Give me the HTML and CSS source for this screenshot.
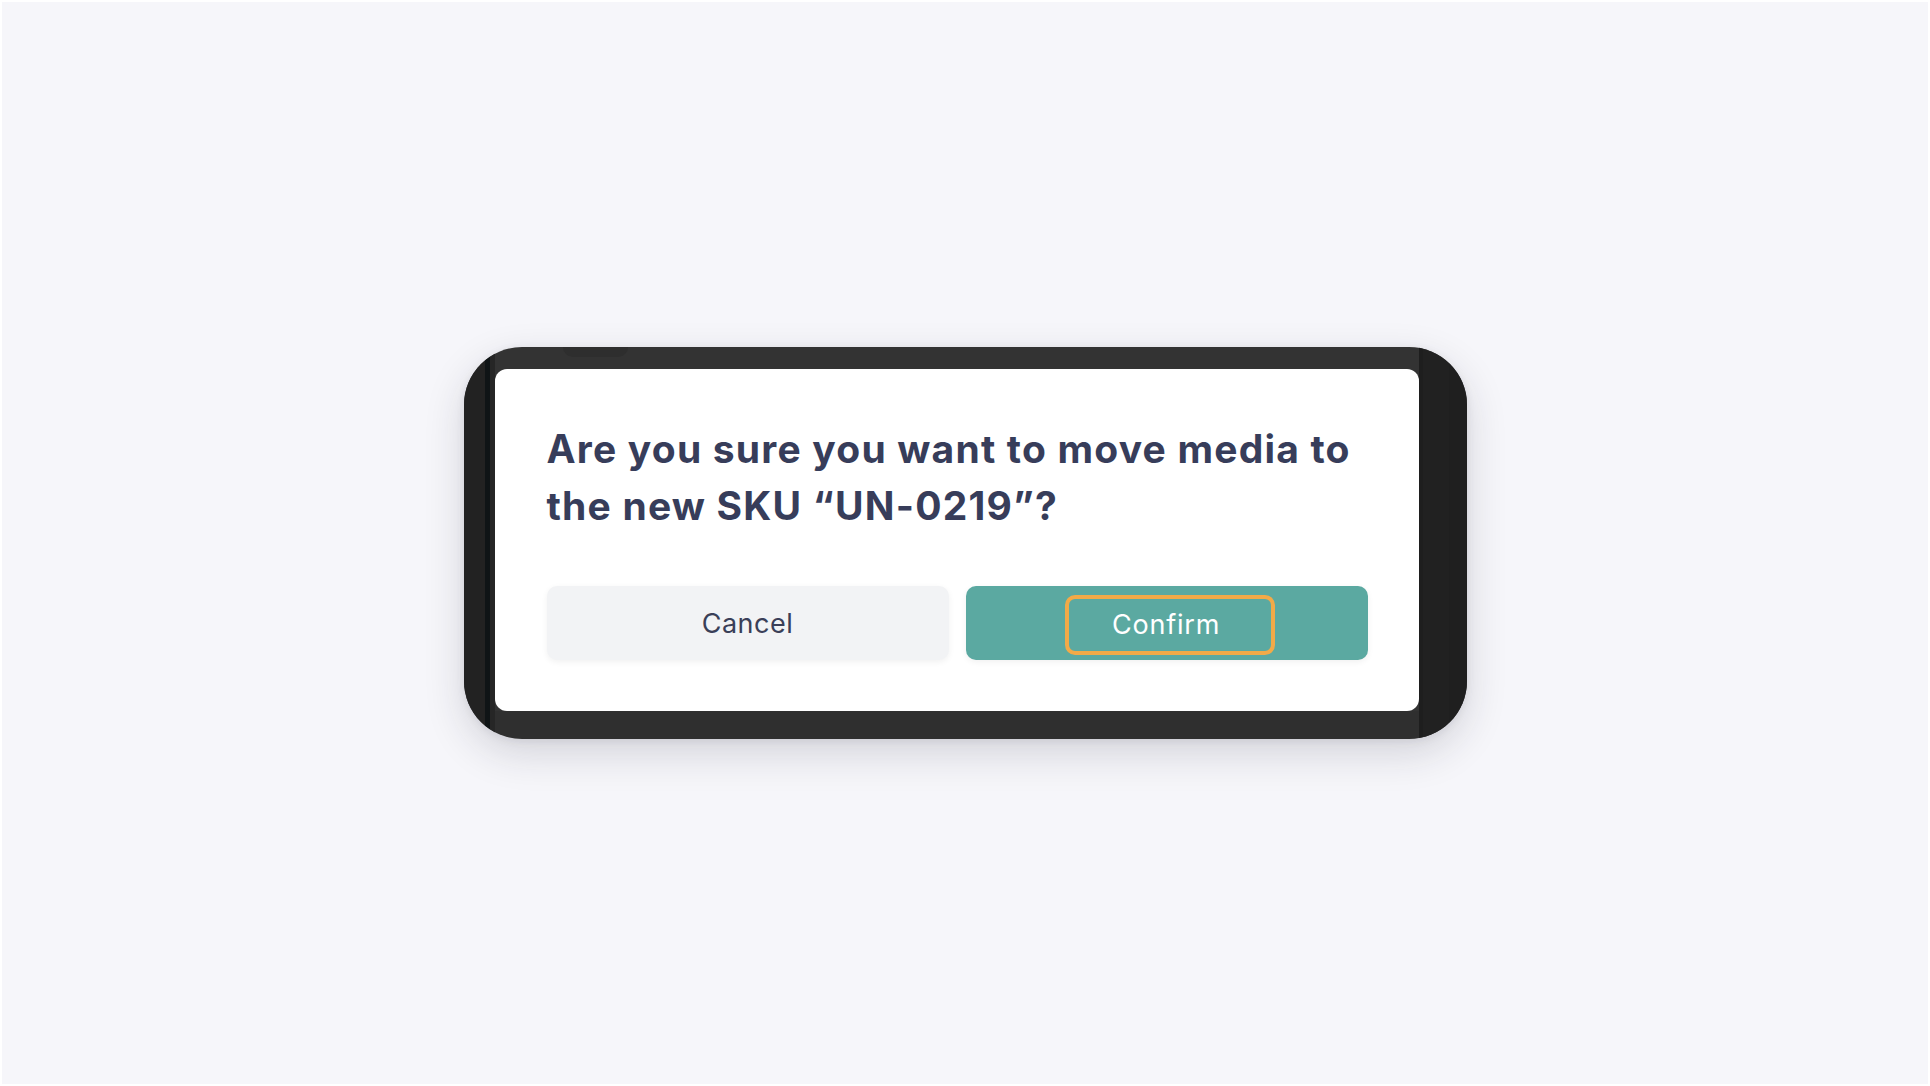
FILE: index.html
```html
<!DOCTYPE html>
<html lang="en">
<head>
<meta charset="utf-8">
<title>Move media</title>
<link rel="stylesheet" href="styles.css">
</head>
<body>
<main class="stage">
  <div class="phone">
    <div class="notch"></div>
    <section class="screen">
      <h1 class="title">Are you sure you want to move media to the new SKU “UN-0219”?</h1>
      <div class="actions">
        <button class="btn btn-cancel" type="button">Cancel</button>
        <button class="btn btn-confirm" type="button"><span class="focus-ring">Confirm</span></button>
      </div>
    </section>
  </div>
</main>
</body>
</html>
```
FILE: styles.css
```css
* { box-sizing: border-box; }
html, body { margin: 0; padding: 0; }
body {
  background: #f6f6fa;
  font-family: Inter, "Liberation Sans", sans-serif;
  border: 2px solid #ffffff;
  min-height: 100vh;
}
.stage {
  min-height: calc(100vh - 4px);
  display: flex;
  align-items: center;
  justify-content: center;
}
.phone {
  position: relative;
  width: 1003px;
  height: 392px;
  border-radius: 58px;
  padding: 22px 48px 28px 31px;
  background:
    linear-gradient(to bottom, #333333 0 22px, transparent 22px calc(100% - 28px), #2f2f2f calc(100% - 28px)),
    #333333;
  background-repeat: no-repeat;
  box-shadow: 0 14px 40px rgba(30, 30, 50, 0.16), 0 2px 8px rgba(30, 30, 50, 0.08);
  overflow: hidden;
}
.phone::before,
.phone::after {
  content: "";
  position: absolute;
  top: 0;
  bottom: 0;
}
.phone::before {
  left: 0;
  width: 31px;
  background: linear-gradient(to right, #222222 0 21px, #0f1416 21px 26px, #262626 26px 31px);
}
.phone::after {
  right: 0;
  width: 48px;
  background: linear-gradient(to right, #1e1e1e 0 4px, #212121 4px 30px, #1f1f1f 30px);
}
.notch {
  position: absolute;
  top: 0;
  left: 99px;
  width: 65px;
  height: 10px;
  background: #2e2e2e;
  border-radius: 0 0 10px 10px;
}
.screen {
  position: relative;
  z-index: 1;
  height: 100%;
  background: #ffffff;
  border-radius: 12px;
  padding: 51px 51px 51px 52px;
  display: flex;
  flex-direction: column;
  justify-content: space-between;
}
.title {
  margin: 0;
  font-size: 39px;
  line-height: 57px;
  font-weight: 700;
  color: #373d5a;
  letter-spacing: 1.2px;
}
.actions {
  display: grid;
  grid-template-columns: 1fr 1fr;
  gap: 17px;
}
.btn {
  height: 74px;
  border: none;
  border-radius: 10px;
  font-family: Inter, "Liberation Sans", sans-serif;
  font-size: 27px;
  font-weight: 400;
  letter-spacing: 0.5px;
  display: flex;
  align-items: center;
  justify-content: center;
  box-shadow: 0 2px 6px rgba(0, 0, 0, 0.06);
}
.btn-cancel {
  background: #f2f3f5;
  color: #3a3f58;
}
.btn-confirm {
  background: #5ba9a1;
  color: #ffffff;
}
.focus-ring {
  display: flex;
  align-items: center;
  justify-content: center;
  width: 210px;
  height: 60px;
  border: 4px solid #f2aa48;
  border-radius: 10px;
  margin-left: 7px;
  margin-top: 3px;
  padding-right: 8px;
  letter-spacing: 0.8px;
}
```
